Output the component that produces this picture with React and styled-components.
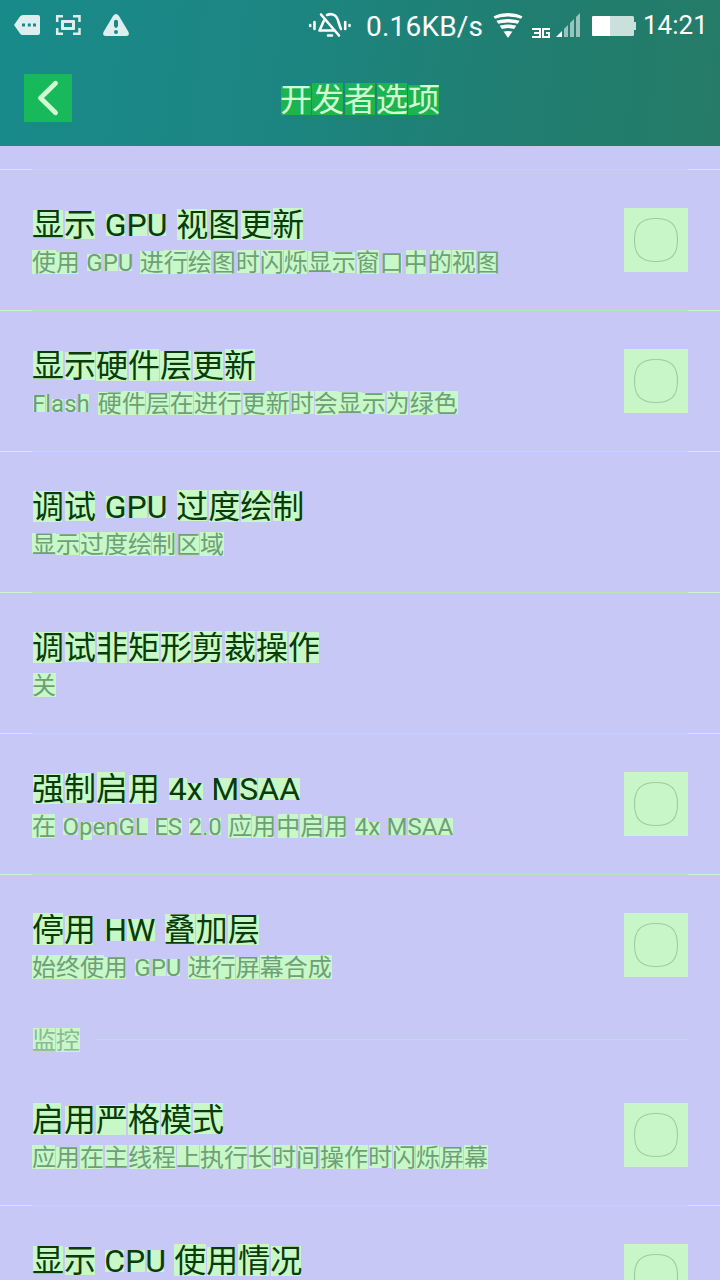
import React, { useLayoutEffect, useRef, useState } from 'react';
import styled, { createGlobalStyle } from 'styled-components';

const FAMILY = 'Roboto, "Noto Sans CJK SC", sans-serif';

const Global = createGlobalStyle`
  * { box-sizing: border-box; }
  body { margin: 0; background: #c8c8f6; font-family: ${FAMILY}; }
`;

const Screen = styled.div`
  display: flex;
  flex-direction: column;
  width: 720px;
  height: 1280px;
  overflow: hidden;
  background: #c8c8f6;
`;

const Header = styled.header`
  flex: none;
  height: 146px;
  background: linear-gradient(97deg, #188a8a 0%, #1c8683 35%, #217d6e 78%, #257b67 100%);
`;

const StatusBar = styled.div`
  display: flex;
  justify-content: space-between;
  height: 50px;
`;

const StatusDrawing = styled.svg`
  display: block;
  flex: none;
`;

const StatusText = styled.span`
  width: ${p => p.$width}px;
  color: #fff;
  font-size: ${p => p.$size}px;
  line-height: ${p => p.$line}px;
  white-space: nowrap;
  letter-spacing: ${p => p.$spacing || 0}px;
`;

const StatusGroup = styled.div`
  display: flex;
`;

const TitleBar = styled.div`
  display: grid;
  grid-template-columns: 48px 1fr 48px;
  align-items: center;
  height: 96px;
  padding: 0 24px;
`;

const BackButton = styled.button`
  display: block;
  width: 48px;
  height: 48px;
  padding: 0;
  border: 0;
  background: #18b95b;
`;

const TitleSlot = styled.div`
  display: flex;
  justify-content: center;
  padding-top: 3px;
`;

const List = styled.main`
  padding-top: 23px;
`;

const Divider = styled.div`
  height: 1px;
  background: linear-gradient(90deg, ${p => p.$edge} 32px, ${p => p.$color} 32px 688px, ${p => p.$edge} 688px);
`;

const Row = styled.section`
  display: flex;
  justify-content: space-between;
  height: 140px;
  padding: 38px 32px 0;
`;

const Labels = styled.div`
  display: flex;
  flex-direction: column;
  align-items: flex-start;
`;

const CheckBox = styled.div`
  width: 64px;
  height: 64px;
  background: #c8f6c8;
`;

const SectionHead = styled.div`
  display: flex;
  height: 50px;
  padding: 11px 32px 0;
`;

const SectionLine = styled.div`
  flex: 1;
  height: 1px;
  margin: 13px 0 0 16px;
  background: #c4dcd4;
`;

const Line = styled.div`
  color: ${p => p.$color};
  font-family: ${FAMILY};
  font-size: ${p => p.$size}px;
  line-height: ${p => p.$height}px;
  word-spacing: ${p => p.$gap}px;
  white-space: pre;
  background-repeat: no-repeat;
`;

// Paints a filled box behind the ink of every glyph in the line.
function InkText({ text, size, height, color, fill, gap = 0 }) {
  const ref = useRef(null);
  const [boxes, setBoxes] = useState({});
  useLayoutEffect(() => {
    const ctx = document.createElement('canvas').getContext('2d');
    ctx.font = `${size}px ${FAMILY}`;
    const font = ctx.measureText('x');
    const ascent = Math.round(font.fontBoundingBoxAscent);
    const descent = Math.round(font.fontBoundingBoxDescent);
    const baseline = Math.floor((height - ascent - descent) / 2) + ascent;
    const origin = ref.current.getBoundingClientRect().left;
    const node = ref.current.firstChild;
    const range = document.createRange();
    const pos = [];
    const dim = [];
    [...text].forEach((ch, i) => {
      if (ch === ' ') return;
      range.setStart(node, i);
      range.setEnd(node, i + 1);
      const x = range.getBoundingClientRect().left - origin;
      const m = ctx.measureText(ch);
      const left = Math.round(x - m.actualBoundingBoxLeft);
      const right = Math.round(x + m.actualBoundingBoxRight);
      const top = Math.round(baseline - m.actualBoundingBoxAscent);
      const bottom = Math.round(baseline + m.actualBoundingBoxDescent);
      pos.push(`${left}px ${top}px`);
      dim.push(`${right - left}px ${bottom - top}px`);
    });
    setBoxes({
      backgroundImage: pos.map(() => `linear-gradient(${fill}, ${fill})`).join(','),
      backgroundPosition: pos.join(','),
      backgroundSize: dim.join(','),
    });
  }, [text, size, height, fill, gap]);
  return <Line ref={ref} $size={size} $height={height} $color={color} $gap={gap} style={boxes}>{text}</Line>;
}

function Check() {
  return (
    <CheckBox role="checkbox" aria-checked="false">
      <svg width="64" height="64" viewBox="0 0 64 64" fill="none" stroke="#a0cba2" strokeWidth="1.1">
        <path d="M32 10.500C47 10.500 53.500 17 53.500 32S47 53.500 32 53.500 10.500 47 10.500 32 17 10.500 32 10.500Z" />
      </svg>
    </CheckBox>
  );
}

function Option({ title, note, check, titleGap = 0.8, noteGap = 0.4 }) {
  return (
    <Row>
      <Labels>
        <InkText text={title} size={32} height={35} color="#0a3c0a" fill="#c8f8c8" gap={titleGap} />
        {note && <InkText text={note} size={24} height={40} color="#6ea078" fill="#c8f8c8" gap={noteGap} />}
      </Labels>
      {check && <Check />}
    </Row>
  );
}

const options = [
  { title: '显示 GPU 视图更新', note: '使用 GPU 进行绘图时闪烁显示窗口中的视图', check: true, edge: '#d6e8ec', line: '#c0dcd0' },
  { title: '显示硬件层更新', note: 'Flash 硬件层在进行更新时会显示为绿色', noteGap: 2, check: true, edge: '#c8f6d0', line: '#b4e6b6' },
  { title: '调试 GPU 过度绘制', note: '显示过度绘制区域', edge: '#d6e8ec', line: '#c0dcd0' },
  { title: '调试非矩形剪裁操作', note: '关', edge: '#c8f6d0', line: '#b4e6b6' },
  { title: '强制启用 4x MSAA', note: '在 OpenGL ES 2.0 应用中启用 4x MSAA', noteGap: 0.5, check: true, edge: '#d6e8ec', line: '#c0dcd0' },
  { title: '停用 HW 叠加层', titleGap: 0.3, note: '始终使用 GPU 进行屏幕合成', check: true, edge: '#c8f6d0', line: '#b4e6b6' },
];

export default function App() {
  return (
    <Screen>
      <Global />
      <Header>
        <StatusBar>
          <StatusDrawing width="140" height="50" viewBox="0 0 140 50" fill="#deeeee">
            <path fillRule="evenodd" d="M14 25L20 16.500Q21 15 23 15H38Q40 15 40 17V33Q40 35 38 35H23Q21 35 20 33.500ZM22 23.500V26.500H25V23.500ZM27.800 23.500V26.500H30.800V23.500ZM33 23.500V26.500H36V23.500Z" />
            <path fill="none" stroke="#deeeee" strokeWidth="2.500" d="M57.200 22V16.200H63M73 16.200H79.500V22M79.500 28V33.800H73M63 33.800H57.200V28" />
            <path fillRule="evenodd" d="M62 20H74Q75 20 75 21V29Q75 30 74 30H62Q61 30 61 29V21Q61 20 62 20ZM64 23V27H72V23Z" />
            <path fillRule="evenodd" d="M113 16Q116 12 119 16L128.500 32Q130 36 126 36H106Q102 36 103.500 32ZM114 21V26Q116 30 118 26V21Q116 18.500 114 21ZM116 30A2 2 0 1 0 116 34A2 2 0 1 0 116 30Z" />
          </StatusDrawing>
          <StatusGroup>
            <StatusDrawing width="58" height="50" viewBox="308 0 58 50" fill="none" stroke="#fff" strokeWidth="2.600" strokeLinecap="round" strokeLinejoin="round">
              <path d="M310.200 25V26M314.500 22V29M345.200 22V29M349.500 25V26M328 35.500H332" />
              <path d="M321 14.500L339 35.500M324 20.500L319.500 30.500H333M327 15Q331 13 335 15.500C338.500 18 338.500 24 341 29" />
            </StatusDrawing>
            <StatusText $size={28} $width={126} $line={53} $spacing={0.2}>0.16KB/s</StatusText>
            <StatusDrawing width="151" height="50" viewBox="492 0 151 50" fill="#fff">
              <clipPath id="fan"><path d="M508 38L493.500 16.500Q508 8 522.500 16.500Z" /></clipPath>
              <g clipPath="url(#fan)" fill="none" stroke="#fff" strokeWidth="3.600">
                <path d="M490 18.500Q508 11 526 18.500M492 24Q508 17.500 524 24M494 30Q508 22.500 522 30" />
                <path fill="#fff" stroke="none" d="M500 33Q508 29 516 33L508 38Z" />
              </g>
              <path fill="none" stroke="#fff" strokeWidth="2" d="M532 29H540V37H532M534 33H540M550 29H543V37H549V33H546" />
              <path d="M556 37L562 31V37Z" />
              <path opacity=".55" d="M564 29L568 25V37H564ZM570 23L574 19V37H570ZM576 17L580 13V37H576Z" />
              <rect x="592" y="16" width="42" height="20" rx="1.500" opacity=".76" />
              <path opacity=".76" d="M634 22H636V30H634Z" />
              <path d="M593 16H610V36H593L592 35V17Z" />
            </StatusDrawing>
            <StatusText $size={26} $width={77} $line={50}>14:21</StatusText>
          </StatusGroup>
        </StatusBar>
        <TitleBar>
          <BackButton aria-label="返回">
            <svg width="48" height="48" fill="none" stroke="#d2fcd2" strokeWidth="4.800" strokeLinecap="round" strokeLinejoin="round"><path d="M31.500 9.300L16.500 24L31.500 38.700" /></svg>
          </BackButton>
          <TitleSlot>
            <InkText text="开发者选项" size={32} height={40} color="#d2fcd2" fill="#1cb450" />
          </TitleSlot>
        </TitleBar>
      </Header>
      <List>
        {options.map(o => (
          <React.Fragment key={o.title}>
            <Divider $edge={o.edge} $color={o.line} />
            <Option {...o} />
          </React.Fragment>
        ))}
        <SectionHead>
          <InkText text="监控" size={24} height={30} color="#8cb996" fill="#c8f8c8" />
          <SectionLine />
        </SectionHead>
        <Option title="启用严格模式" note="应用在主线程上执行长时间操作时闪烁屏幕" check />
        <Divider $edge="#d6e8ec" $color="#c0dcd0" />
        <Option title="显示 CPU 使用情况" titleGap={0.3} check />
      </List>
    </Screen>
  );
}
